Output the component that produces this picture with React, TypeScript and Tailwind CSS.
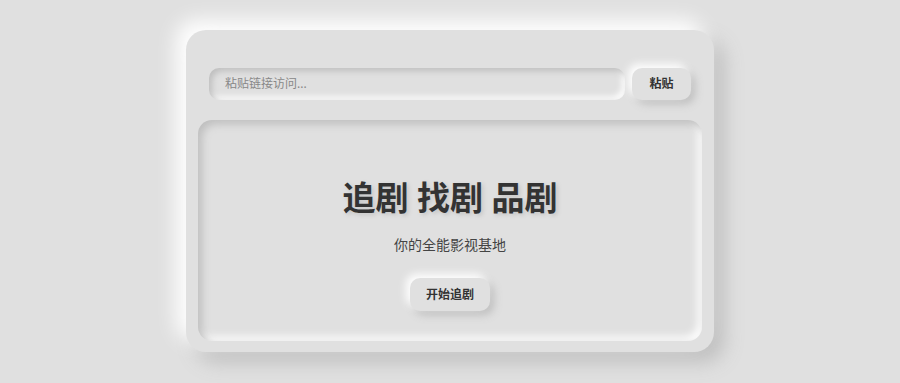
export default function App() {
  return (
    <div
      className="flex h-[383px] w-[900px] items-start justify-center bg-[#e0e0e0] pt-[30px]"
      style={{ fontFamily: '"Noto Sans", "Noto Sans CJK SC", sans-serif' }}
    >
      <div className="flex h-[322px] w-[528px] flex-col rounded-[20px] bg-[#e0e0e0] px-[12px] pb-[11px] pt-[38px] shadow-[-10px_-10px_20px_#ffffff,10px_10px_20px_#bebebe]">
        <div className="flex items-center gap-[7px] px-[11px]">
          <div className="flex h-[32px] flex-1 items-center rounded-[10px] bg-[#e0e0e0] px-[16px] shadow-[inset_3px_3px_6px_#bebebe,inset_-3px_-3px_6px_#ffffff]">
            <span className="text-[12px] text-[#888]">粘贴链接访问...</span>
          </div>
          <button className="h-[32px] w-[59px] rounded-[10px] bg-[#e0e0e0] text-[12px] font-semibold text-[#333] shadow-[-4px_-4px_8px_#ffffff,4px_4px_8px_#bebebe]">
            粘贴
          </button>
        </div>
        <div className="mt-[20px] flex flex-1 flex-col items-center rounded-[14px] bg-[#e0e0e0] pt-[53px] shadow-[inset_4px_4px_8px_#bebebe,inset_-4px_-4px_8px_#ffffff]">
          <h1 className="text-[33px] font-bold leading-[50px] text-[#333] [text-shadow:2px_2px_4px_#c4c4c4]">
            追剧 找剧 品剧
          </h1>
          <p className="mt-[12px] text-[14px] leading-[20px] text-[#444]">你的全能影视基地</p>
          <button className="mt-[23px] h-[33px] w-[80px] rounded-[10px] bg-[#e0e0e0] text-[12px] font-semibold text-[#333] shadow-[-4px_-4px_8px_#ffffff,4px_4px_8px_#bebebe]">
            开始追剧
          </button>
        </div>
      </div>
    </div>
  )
}
